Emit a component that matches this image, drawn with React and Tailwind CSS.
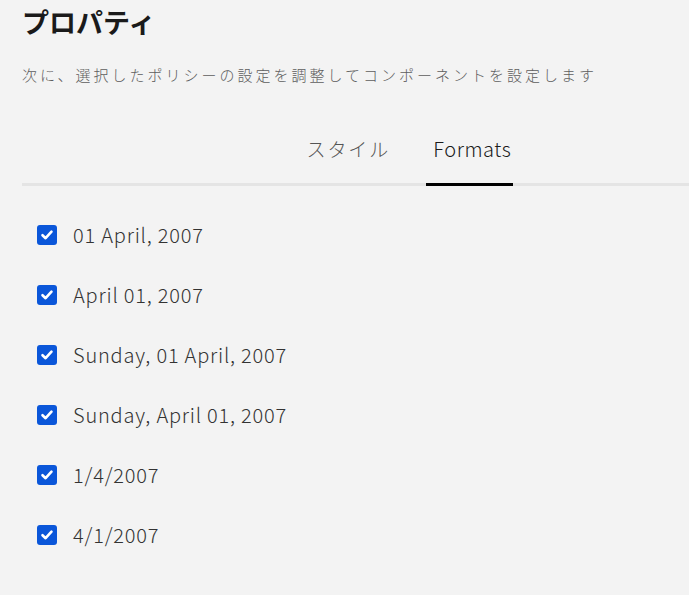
import React, { useState } from 'react';

const formats = [
    '01 April, 2007',
    'April 01, 2007',
    'Sunday, 01 April, 2007',
    'Sunday, April 01, 2007',
    '1/4/2007',
    '4/1/2007',
];

const CheckBox = ({ checked, onClick }) => (
    <button
        onClick={onClick}
        className={`w-5 h-5 rounded-[3px] flex items-center justify-center ${checked ? 'bg-[#0a56d9]' : 'bg-white border-2 border-[#666]'}`}
    >
        {checked && (
            <svg width="14" height="14" viewBox="0 0 14 14" fill="none">
                <path d="M2.5 7.2 L5.6 10.2 L11.5 3.6" stroke="white" strokeWidth="2.6" strokeLinecap="round" strokeLinejoin="round" />
            </svg>
        )}
    </button>
);

const App = () => {
    const [tab, setTab] = useState('formats');
    const [checked, setChecked] = useState(formats.map(() => true));

    const toggle = (i) => {
        setChecked(checked.map((c, j) => (j === i ? !c : c)));
    };

    return (
        <div
            className="min-h-screen bg-[#f3f3f3] text-[#1a1a1a]"
            style={{ fontFamily: '"Noto Sans CJK JP", "Noto Sans", sans-serif' }}
        >
            <div className="pl-[22px] pt-[3px]">
                <h1 className="text-[27px] font-bold leading-[38px]">プロパティ</h1>
                <p className="mt-[23px] text-[15px] font-light leading-[22px] tracking-[0.2em] text-[#5e5e5e]">
                    次に、選択したポリシーの設定を調整してコンポーネントを設定します
                </p>

                <div className="mt-[49px] border-b-[3px] border-[#e4e4e4] flex justify-center">
                    <div className="flex gap-[29px] pr-[22px] ml-[124px]">
                        <button
                            onClick={() => setTab('style')}
                            className={`px-[7px] pb-[20px] text-[19px] font-light leading-[28px] tracking-[0.1em] -mb-[3px] border-b-[3px] ${tab === 'style' ? 'border-black text-[#1a1a1a]' : 'border-transparent text-[#555]'}`}
                        >
                            スタイル
                        </button>
                        <button
                            onClick={() => setTab('formats')}
                            className={`pl-[7px] pr-[2px] pb-[20px] text-[20px] font-light leading-[28px] tracking-[0.03em] -mb-[3px] border-b-[3px] ${tab === 'formats' ? 'border-black text-[#1a1a1a]' : 'border-transparent text-[#555]'}`}
                        >
                            Formats
                        </button>
                    </div>
                </div>

                <div className="pt-[34px] pl-[15px] flex flex-col gap-[30px]">
                    {formats.map((f, i) => (
                        <div key={f} className="flex items-center gap-4 h-[30px]">
                            <CheckBox checked={checked[i]} onClick={() => toggle(i)} />
                            <span className="text-[20px] font-light leading-[30px] tracking-[0.04em] text-[#333]">{f}</span>
                        </div>
                    ))}
                </div>
            </div>
        </div>
    );
};

export default App;
